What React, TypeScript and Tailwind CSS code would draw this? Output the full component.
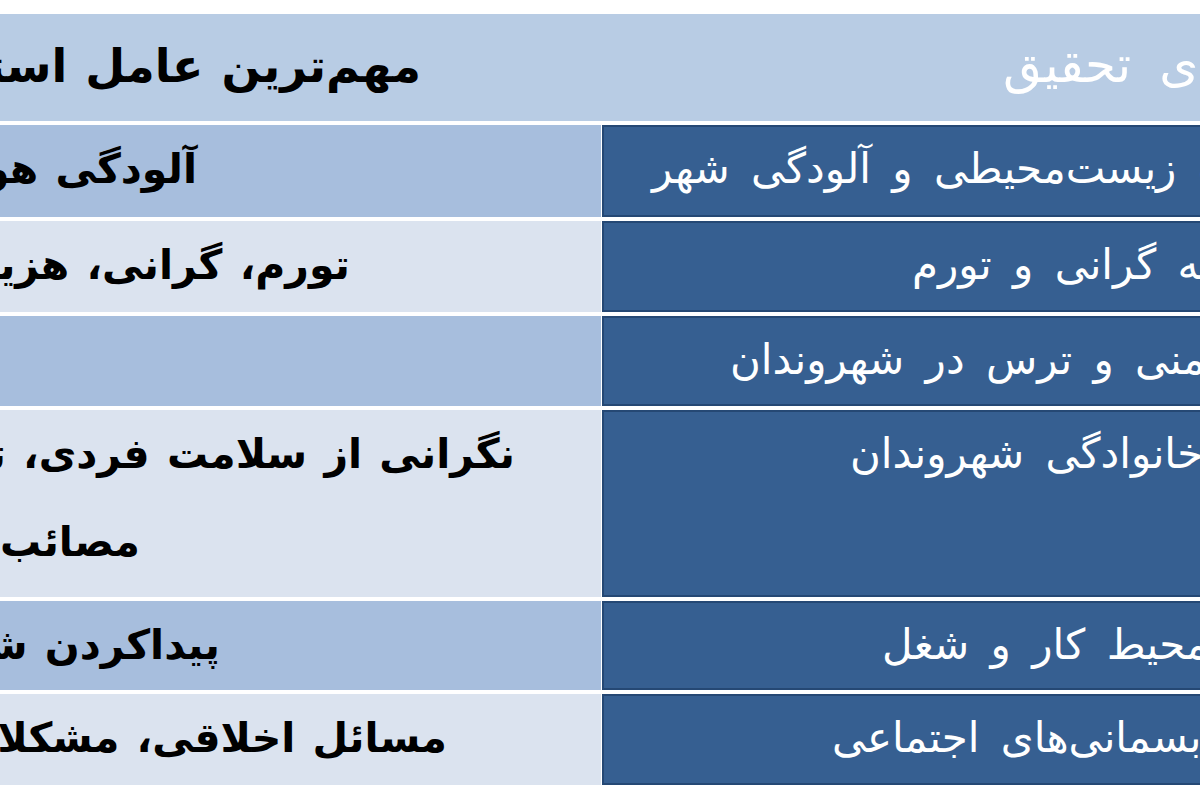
type Line = { text: string; pr: string };
type Row = {
  h: string;
  tone: "mid" | "light";
  left: Line[];
  right: { text: string; pl: string };
};

const rows: Row[] = [
  {
    h: "h-[92px]",
    tone: "mid",
    left: [{ text: "آلودگی هوا", pr: "pr-[404px]" }],
    right: { text: "مشکلات زیست‌محیطی و آلودگی شهر", pl: "pl-[48px]" },
  },
  {
    h: "h-[91px]",
    tone: "light",
    left: [{ text: "تورم، گرانی، هزینه‌های زندگی", pr: "pr-[251px]" }],
    right: { text: "افزایش هزینه گرانی و تورم", pl: "pl-[308px]" },
  },
  {
    h: "h-[90px]",
    tone: "mid",
    left: [],
    right: { text: "احساس ناامنی و ترس در شهروندان", pl: "pl-[126px]" },
  },
  {
    h: "h-[187px]",
    tone: "light",
    left: [
      { text: "نگرانی از سلامت فردی، ترس از بیماری", pr: "pr-[86px]" },
      { text: "مصائب آن", pr: "pr-[461px]" },
    ],
    right: { text: "مشکلات سلامت خانوادگی شهروندان", pl: "pl-[246px]" },
  },
  {
    h: "h-[89px]",
    tone: "mid",
    left: [{ text: "پیداکردن شغل", pr: "pr-[381px]" }],
    right: { text: "مشکلات محیط کار و شغل", pl: "pl-[278px]" },
  },
  {
    h: "h-[91px]",
    tone: "light",
    left: [{ text: "مسائل اخلاقی، مشکلات اجتماعی", pr: "pr-[154px]" }],
    right: { text: "ناهنجاری‌ها و نابسمانی‌های اجتماعی", pl: "pl-[228px]" },
  },
];

export default function App() {
  return (
    <div className="w-[1200px] h-[800px] overflow-hidden bg-white pt-[14px] font-['DejaVu_Sans',sans-serif]">
      <div className="flex flex-col gap-[4px]">
        <div className="h-[107px] bg-[#b8cce4] grid grid-cols-[602px_598px]">
          <div dir="rtl" className="overflow-hidden whitespace-nowrap pr-[181px] text-[46px] font-bold leading-[104px] text-black [word-spacing:2px]">
            مهم‌ترین عامل استرس
          </div>
          <div className="overflow-hidden whitespace-nowrap pl-[401px] text-[50px] leading-[102px] text-white [word-spacing:12px]">
            <span dir="rtl">یافته‌های تحقیق</span>
          </div>
        </div>

        {rows.map((row, i) => (
          <div key={i} className={`${row.h} grid grid-cols-[601px_598px] gap-x-px`}>
            <div
              dir="rtl"
              className={`overflow-hidden ${row.tone === "mid" ? "bg-[#a7bedd]" : "bg-[#dbe3ef]"}`}
            >
              {row.left.map((line, j) => (
                <div
                  key={j}
                  className={`whitespace-nowrap ${line.pr} text-[41px] font-bold leading-[88px] text-black [word-spacing:3px]`}
                >
                  {line.text}
                </div>
              ))}
            </div>
            <div className="overflow-hidden border-2 border-r-0 border-[#254874] bg-[#365f91]">
              <div className={`whitespace-nowrap ${row.right.pl} text-[42px] leading-[84px] text-white [word-spacing:8px]`}>
                <span dir="rtl">{row.right.text}</span>
              </div>
            </div>
          </div>
        ))}
      </div>
    </div>
  );
}
